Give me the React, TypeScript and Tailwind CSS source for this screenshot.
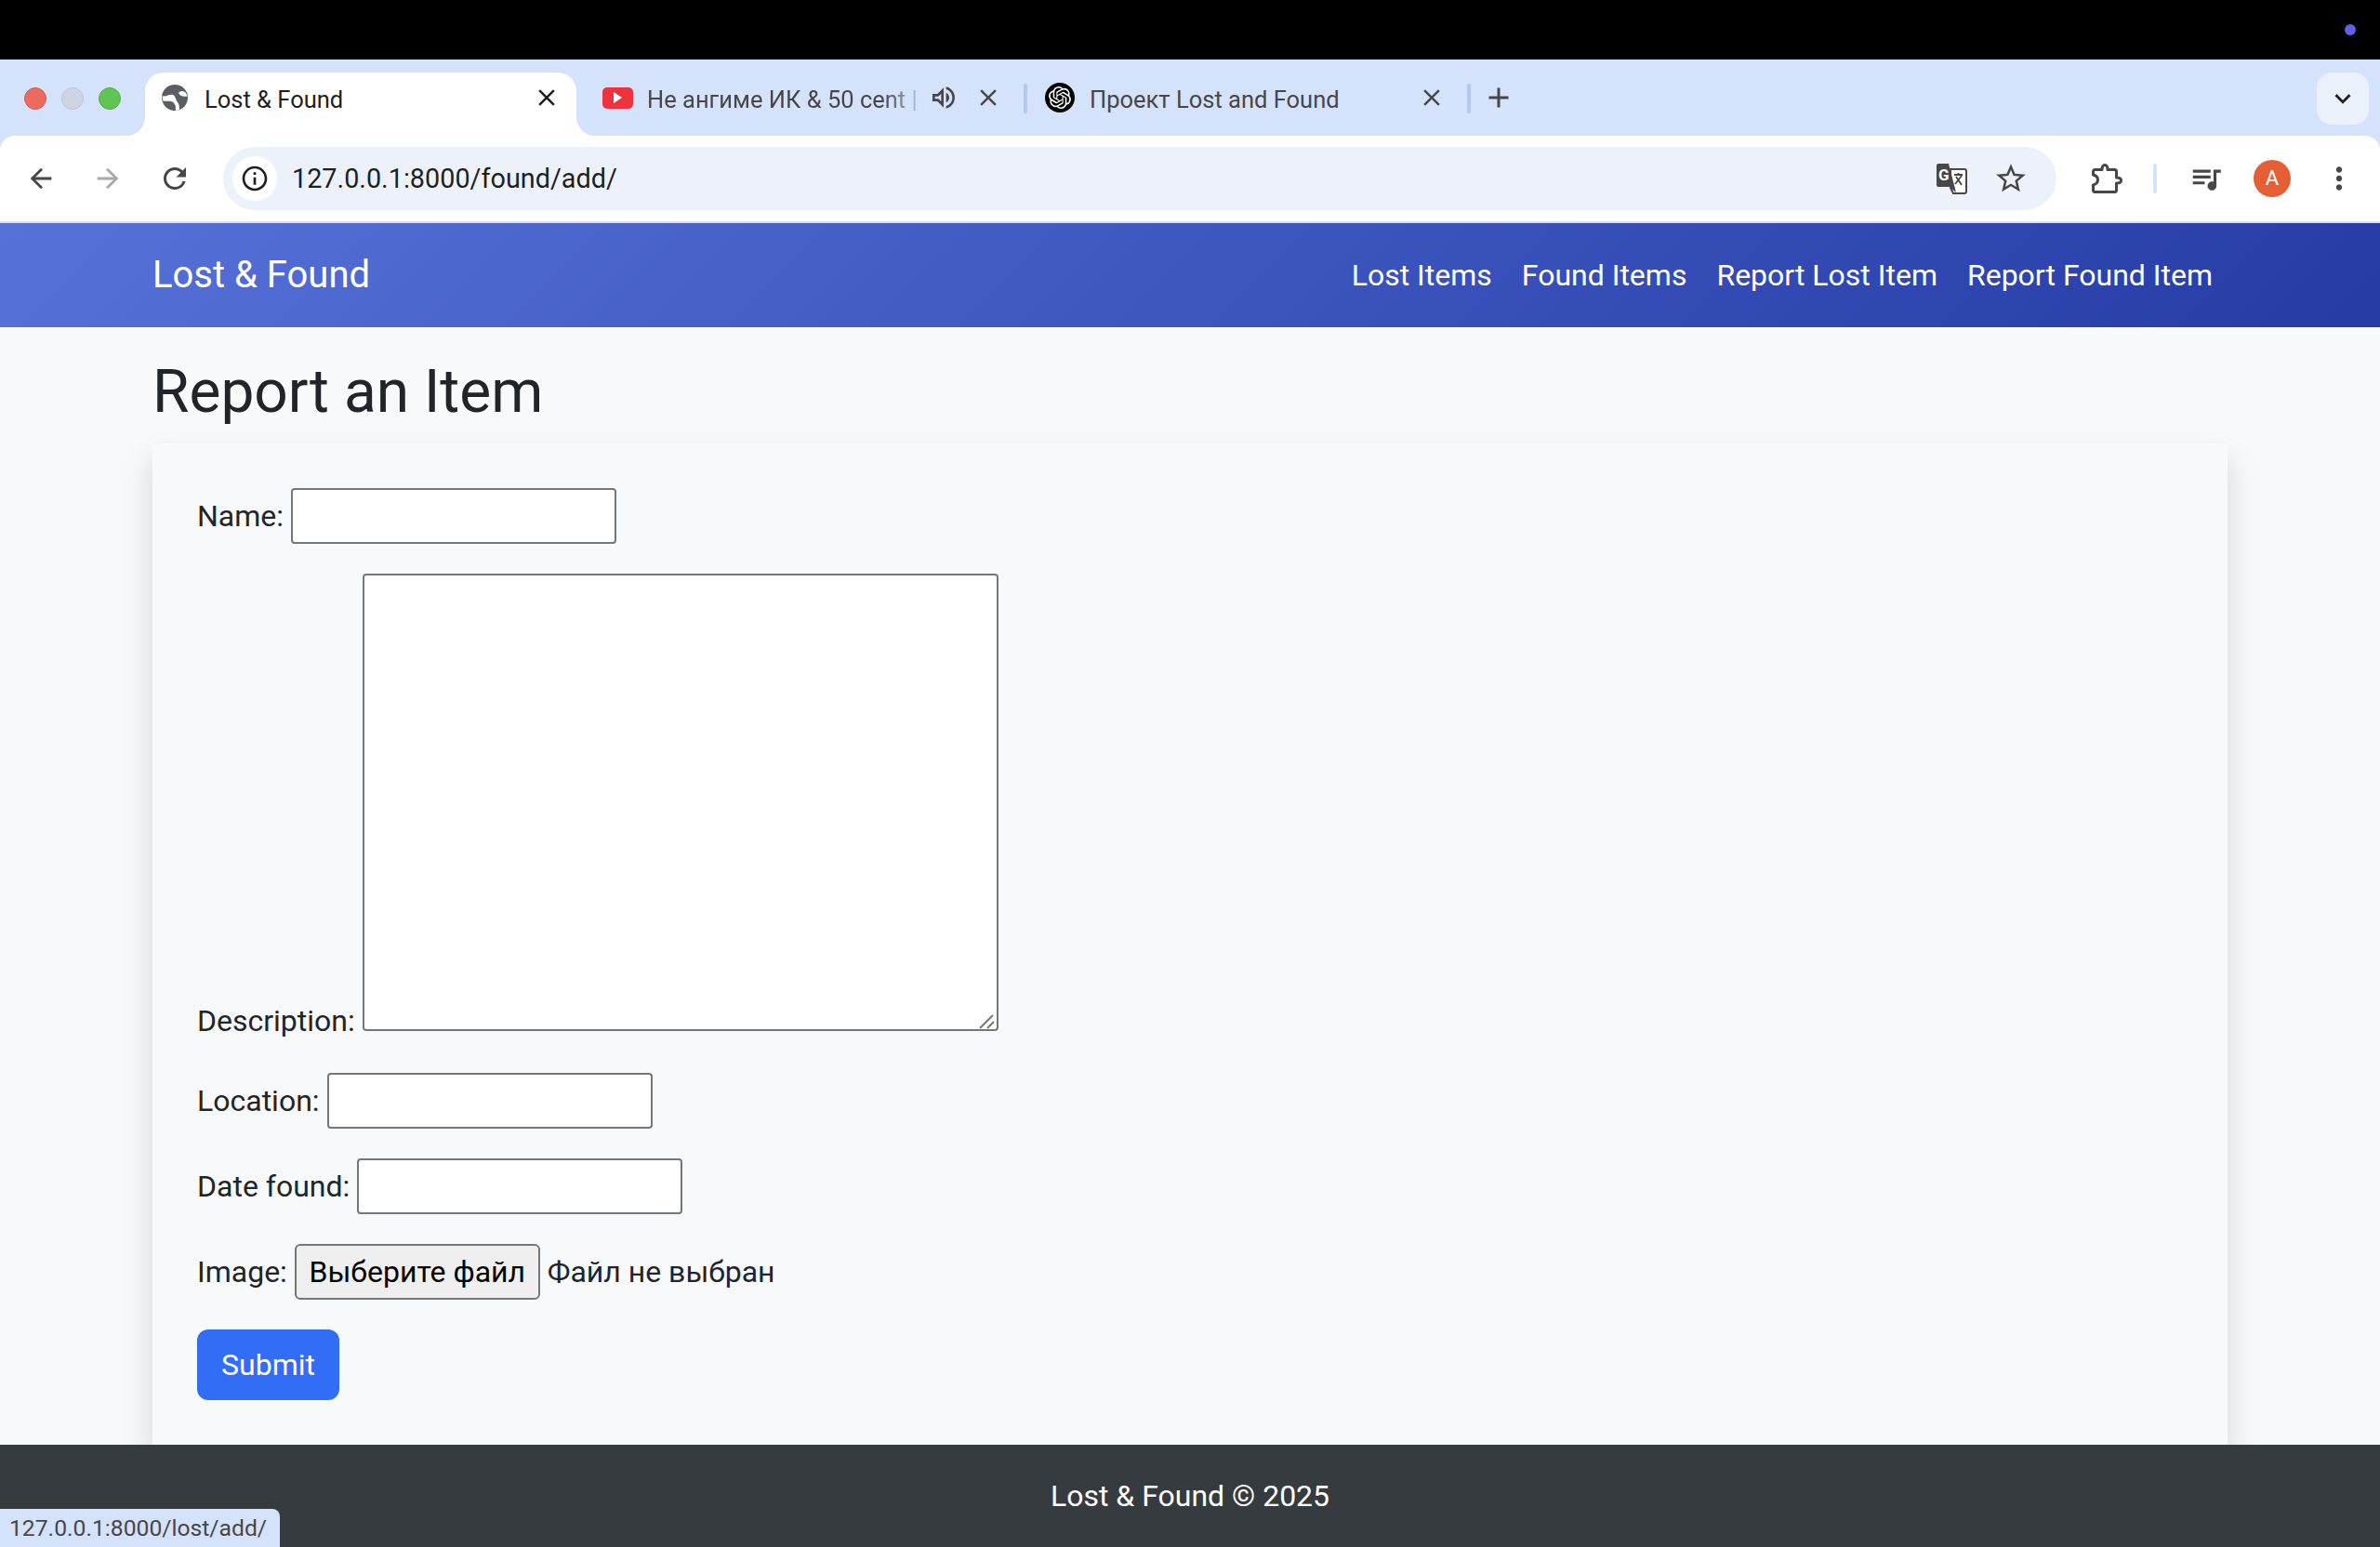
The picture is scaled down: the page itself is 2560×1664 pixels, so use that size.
import { SiOpenai } from "react-icons/si";
import {
  MdAdd,
  MdArrowBack,
  MdArrowForward,
  MdClose,
  MdExpandMore,
  MdInfoOutline,
  MdMoreVert,
  MdOutlineQueueMusic,
  MdOutlineVolumeUp,
  MdRefresh,
  MdStarBorder,
} from "react-icons/md";

const navLinks = ["Lost Items", "Found Items", "Report Lost Item", "Report Found Item"];

function GlobeIcon() {
  return (
    <svg width="28" height="28" viewBox="0 0 28 28" className="shrink-0">
      <circle cx="14" cy="14" r="14" fill="#5b5f65" />
      <path d="M.5 12C4 14 8 10 12 11c3 1 3 6 5 8s2 6 2 8l-4 1c0-4 0-7-3-9-3-2.500-8 0-11-2z" fill="#fff" />
      <path d="M18 9c3-3 6-2 8 0l1.500 3.500C24 13 20 13 18 9z" fill="#fff" />
    </svg>
  );
}

function TranslateIcon() {
  return (
    <svg width="34" height="34" viewBox="0 0 34 34">
      <path d="M16 7h15a2 2 0 0 1 2 2v22a2 2 0 0 1-2 2H19l-3-6z" fill="#fff" stroke="#474747" strokeWidth="2" />
      <path d="M3 1h11l8 31-7-6H3a2 2 0 0 1-2-2V3a2 2 0 0 1 2-2z" fill="#474747" />
      <text x="3" y="19" fontSize="17" fontWeight="700" fill="#fff" fontFamily="Roboto, sans-serif">
        G
      </text>
      <path d="M20 13h9M24.500 11v2M21 23l7-9M22 15l6 9" stroke="#474747" strokeWidth="1.800" fill="none" />
    </svg>
  );
}

function ExtensionIcon() {
  return (
    <svg width="33" height="33" viewBox="0 0 33 33" className="ml-[38px] shrink-0">
      <path
        d="M3.500 6.500H11C11 3.500 12 1.500 14 1.500S17 3.500 17 6.500h7.500a2 2 0 0 1 2 2V15C29.500 15 31.500 15.800 31.500 18S29.500 21 26.500 21v7.500a2 2 0 0 1-2 2h-21a2 2 0 0 1-2-2V23C5 22 6.500 20.500 6.500 17.500S5 13 1.500 12V8.500a2 2 0 0 1 2-2z"
        fill="none"
        stroke="#474747"
        strokeWidth="3"
        strokeLinejoin="round"
      />
    </svg>
  );
}

function YoutubeIcon() {
  return (
    <div className="flex h-[23px] w-[33px] shrink-0 items-center justify-center rounded-[5px] bg-[#ee3340]">
      <div className="h-0 w-0 border-y-[6px] border-l-[9px] border-y-transparent border-l-white" />
    </div>
  );
}

function TabClose({ color }: { color: string }) {
  return <MdClose size={30} color={color} className="shrink-0" />;
}

function Flare({ side }: { side: "left" | "right" }) {
  return (
    <div className={`absolute bottom-0 h-[20px] w-[20px] bg-white ${side === "left" ? "left-[-20px]" : "right-[-20px]"}`}>
      <div className={`h-full w-full bg-[#d5e2fb] ${side === "left" ? "rounded-br-[20px]" : "rounded-bl-[20px]"}`} />
    </div>
  );
}

function TabStrip() {
  return (
    <div className="flex h-[82px] shrink-0 items-end bg-[#d5e2fb] text-[25.500px] leading-[32px]">
      <div className="flex h-[68px] w-[156px] shrink-0 items-center gap-[16px] self-end pb-[14px] pl-[26px] pt-[2px]">
        <div className="h-[24px] w-[24px] rounded-full border border-[#d8594e] bg-[#ee6a5f]" />
        <div className="h-[24px] w-[24px] rounded-full border border-[#bcc4d4] bg-[#cdd5e5]" />
        <div className="h-[24px] w-[24px] rounded-full border border-[#52ad46] bg-[#61c554]" />
      </div>

      <div className="relative flex h-[68px] w-[464px] shrink-0 items-center rounded-t-[20px] bg-white pb-[14px] pl-[18px] pr-[17px] text-[#1f1f1f]">
        <Flare side="left" />
        <GlobeIcon />
        <span className="ml-[18px] flex-1 whitespace-nowrap pt-[3px]">Lost &amp; Found</span>
        <TabClose color="#1f1f1f" />
        <Flare side="right" />
      </div>

      <div className="flex h-[68px] w-[481px] shrink-0 items-center pb-[14px] pl-[28px] text-[#474747]">
        <YoutubeIcon />
        <span className="ml-[15px] w-[295px] shrink-0 whitespace-nowrap pt-[3px] [mask-image:linear-gradient(to_right,black_86%,rgba(0,0,0,0.15)_100%)]">
          Не ангиме ИК &amp; 50 cent |
        </span>
        <MdOutlineVolumeUp size={32} className="ml-[8px] shrink-0" />
        <div className="ml-[17px]">
          <TabClose color="#474747" />
        </div>
      </div>

      <div className="mb-[24px] h-[32px] w-[4px] shrink-0 rounded-[2px] bg-[#b0c8f6]" />

      <div className="flex h-[68px] w-[473px] shrink-0 items-center pb-[14px] pl-[19px] pr-[23px] text-[#474747]">
        <div className="flex h-[32px] w-[32px] shrink-0 items-center justify-center rounded-full bg-black">
          <SiOpenai size={24} color="#fff" />
        </div>
        <span className="ml-[16px] flex-1 whitespace-nowrap pt-[3px]">Проект Lost and Found</span>
        <TabClose color="#474747" />
      </div>

      <div className="mb-[24px] h-[32px] w-[4px] shrink-0 rounded-[2px] bg-[#b0c8f6]" />

      <div className="ml-[12px] flex h-[68px] items-center pb-[14px]">
        <MdAdd size={36} color="#474747" />
      </div>

      <div className="mb-[12px] ml-auto mr-[12px] flex h-[56px] w-[56px] items-center justify-center rounded-[16px] bg-[#ebf1fb]">
        <MdExpandMore size={34} color="#1f1f1f" />
      </div>
    </div>
  );
}

function Toolbar() {
  return (
    <div className="flex h-[94px] shrink-0 items-center bg-[#d5e2fb]">
      <div className="flex h-full w-full items-center rounded-t-[16px] border-b-2 border-[#dedede] bg-white pl-[8px]">
        <div className="flex h-[72px] w-[72px] items-center justify-center">
          <MdArrowBack size={34} color="#474747" />
        </div>
        <div className="flex h-[72px] w-[72px] items-center justify-center">
          <MdArrowForward size={34} color="#a9a9a9" />
        </div>
        <div className="flex h-[72px] w-[72px] items-center justify-center">
          <MdRefresh size={36} color="#474747" />
        </div>

        <div className="ml-[16px] flex h-[68px] w-[1972px] shrink-0 items-center rounded-full bg-[#edf2fa] pl-[10px] pr-[30px]">
          <div className="flex h-[48px] w-[48px] items-center justify-center rounded-full bg-white">
            <MdInfoOutline size={32} color="#1f1f1f" />
          </div>
          <span className="ml-[16px] flex-1 text-[28.800px] text-[#1f1f1f]">127.0.0.1:8000/found/add/</span>
          <TranslateIcon />
          <MdStarBorder size={38} color="#474747" className="ml-[28px]" />
        </div>

        <ExtensionIcon />
        <div className="ml-[33px] h-[32px] w-[4px] shrink-0 rounded-[2px] bg-[#d5e2fb]" />
        <MdOutlineQueueMusic size={38} color="#474747" className="ml-[34px] shrink-0" />
        <div className="ml-[32px] flex h-[40px] w-[40px] shrink-0 items-center justify-center rounded-full bg-[#e45f33] text-[22px] text-white">
          A
        </div>
        <MdMoreVert size={38} color="#474747" className="ml-[33px] shrink-0" />
      </div>
    </div>
  );
}

function Navbar() {
  return (
    <nav className="flex h-[112px] shrink-0 items-center justify-between bg-[linear-gradient(135deg,#5672d9,#263ba6)] pl-[164px] pr-[180px] text-white">
      <span className="text-[40px]">Lost &amp; Found</span>
      <div className="flex gap-[32px] text-[32px]">
        {navLinks.map((link) => (
          <span key={link}>{link}</span>
        ))}
      </div>
    </nav>
  );
}

function ReportForm() {
  const inputClass = "h-[60px] w-[350px] rounded-[4px] border-2 border-[#767676] bg-white";
  return (
    <form className="bg-[#f8f9fa] p-[48px] shadow-[0_16px_32px_rgba(0,0,0,0.15)]">
      <p className="mb-[32px]">
        <label>Name:</label> <input type="text" className={`inline-block ${inputClass}`} />
      </p>
      <p className="mb-[32px]">
        <label>Description:</label>{" "}
        <textarea className="inline-block h-[492px] w-[684px] resize-none rounded-[4px] border-2 border-[#767676] bg-white" />
        <span className="relative inline-block h-0 w-0">
          {/* resize grip */}
          <svg width="20" height="16" viewBox="0 0 20 16" className="absolute bottom-[2px] left-[-21px]">
            <path d="M1 15 15 1M9 15l7-7" stroke="#767676" strokeWidth="2" fill="none" />
          </svg>
        </span>
      </p>
      <p className="mb-[32px]">
        <label>Location:</label> <input type="text" className={`inline-block ${inputClass}`} />
      </p>
      <p className="mb-[32px]">
        <label>Date found:</label> <input type="text" className={`inline-block ${inputClass}`} />
      </p>
      <p className="mb-[32px]">
        <label>Image:</label>{" "}
        <button type="button" className="inline-block h-[60px] w-[264px] rounded-[6px] border-2 border-[#767676] bg-[#efefef] text-black">
          Выберите файл
        </button>{" "}
        <span>Файл не выбран</span>
      </p>
      <button type="button" className="h-[76px] w-[153px] rounded-[12px] bg-[#316df6] text-white">
        Submit
      </button>
    </form>
  );
}

export default function App() {
  return (
    <div className="relative flex h-screen flex-col overflow-hidden bg-[#f8f9fa] font-['Roboto',sans-serif] text-[32px] leading-[48px] text-[#212529]">
      <div className="relative h-[64px] shrink-0 bg-black">
        <div className="absolute left-[2522px] top-[26px] h-[12px] w-[12px] rounded-full bg-[#6060e8]" />
      </div>
      <TabStrip />
      <Toolbar />
      <Navbar />

      <main className="min-h-0 flex-1 px-[164px] pt-[32px]">
        <h1 className="mb-[18px] text-[64px] leading-[75px]">Report an Item</h1>
        <ReportForm />
      </main>

      <footer className="z-10 flex h-[110px] shrink-0 items-center justify-center bg-[#363b3f] text-white">
        Lost &amp; Found © 2025
      </footer>

      <div className="absolute bottom-0 left-0 z-20 flex h-[41px] w-[301px] items-center rounded-tr-[8px] bg-[#d5e2fb] pl-[10px] text-[24.700px] text-[#474747]">
        127.0.0.1:8000/lost/add/
      </div>
    </div>
  );
}
